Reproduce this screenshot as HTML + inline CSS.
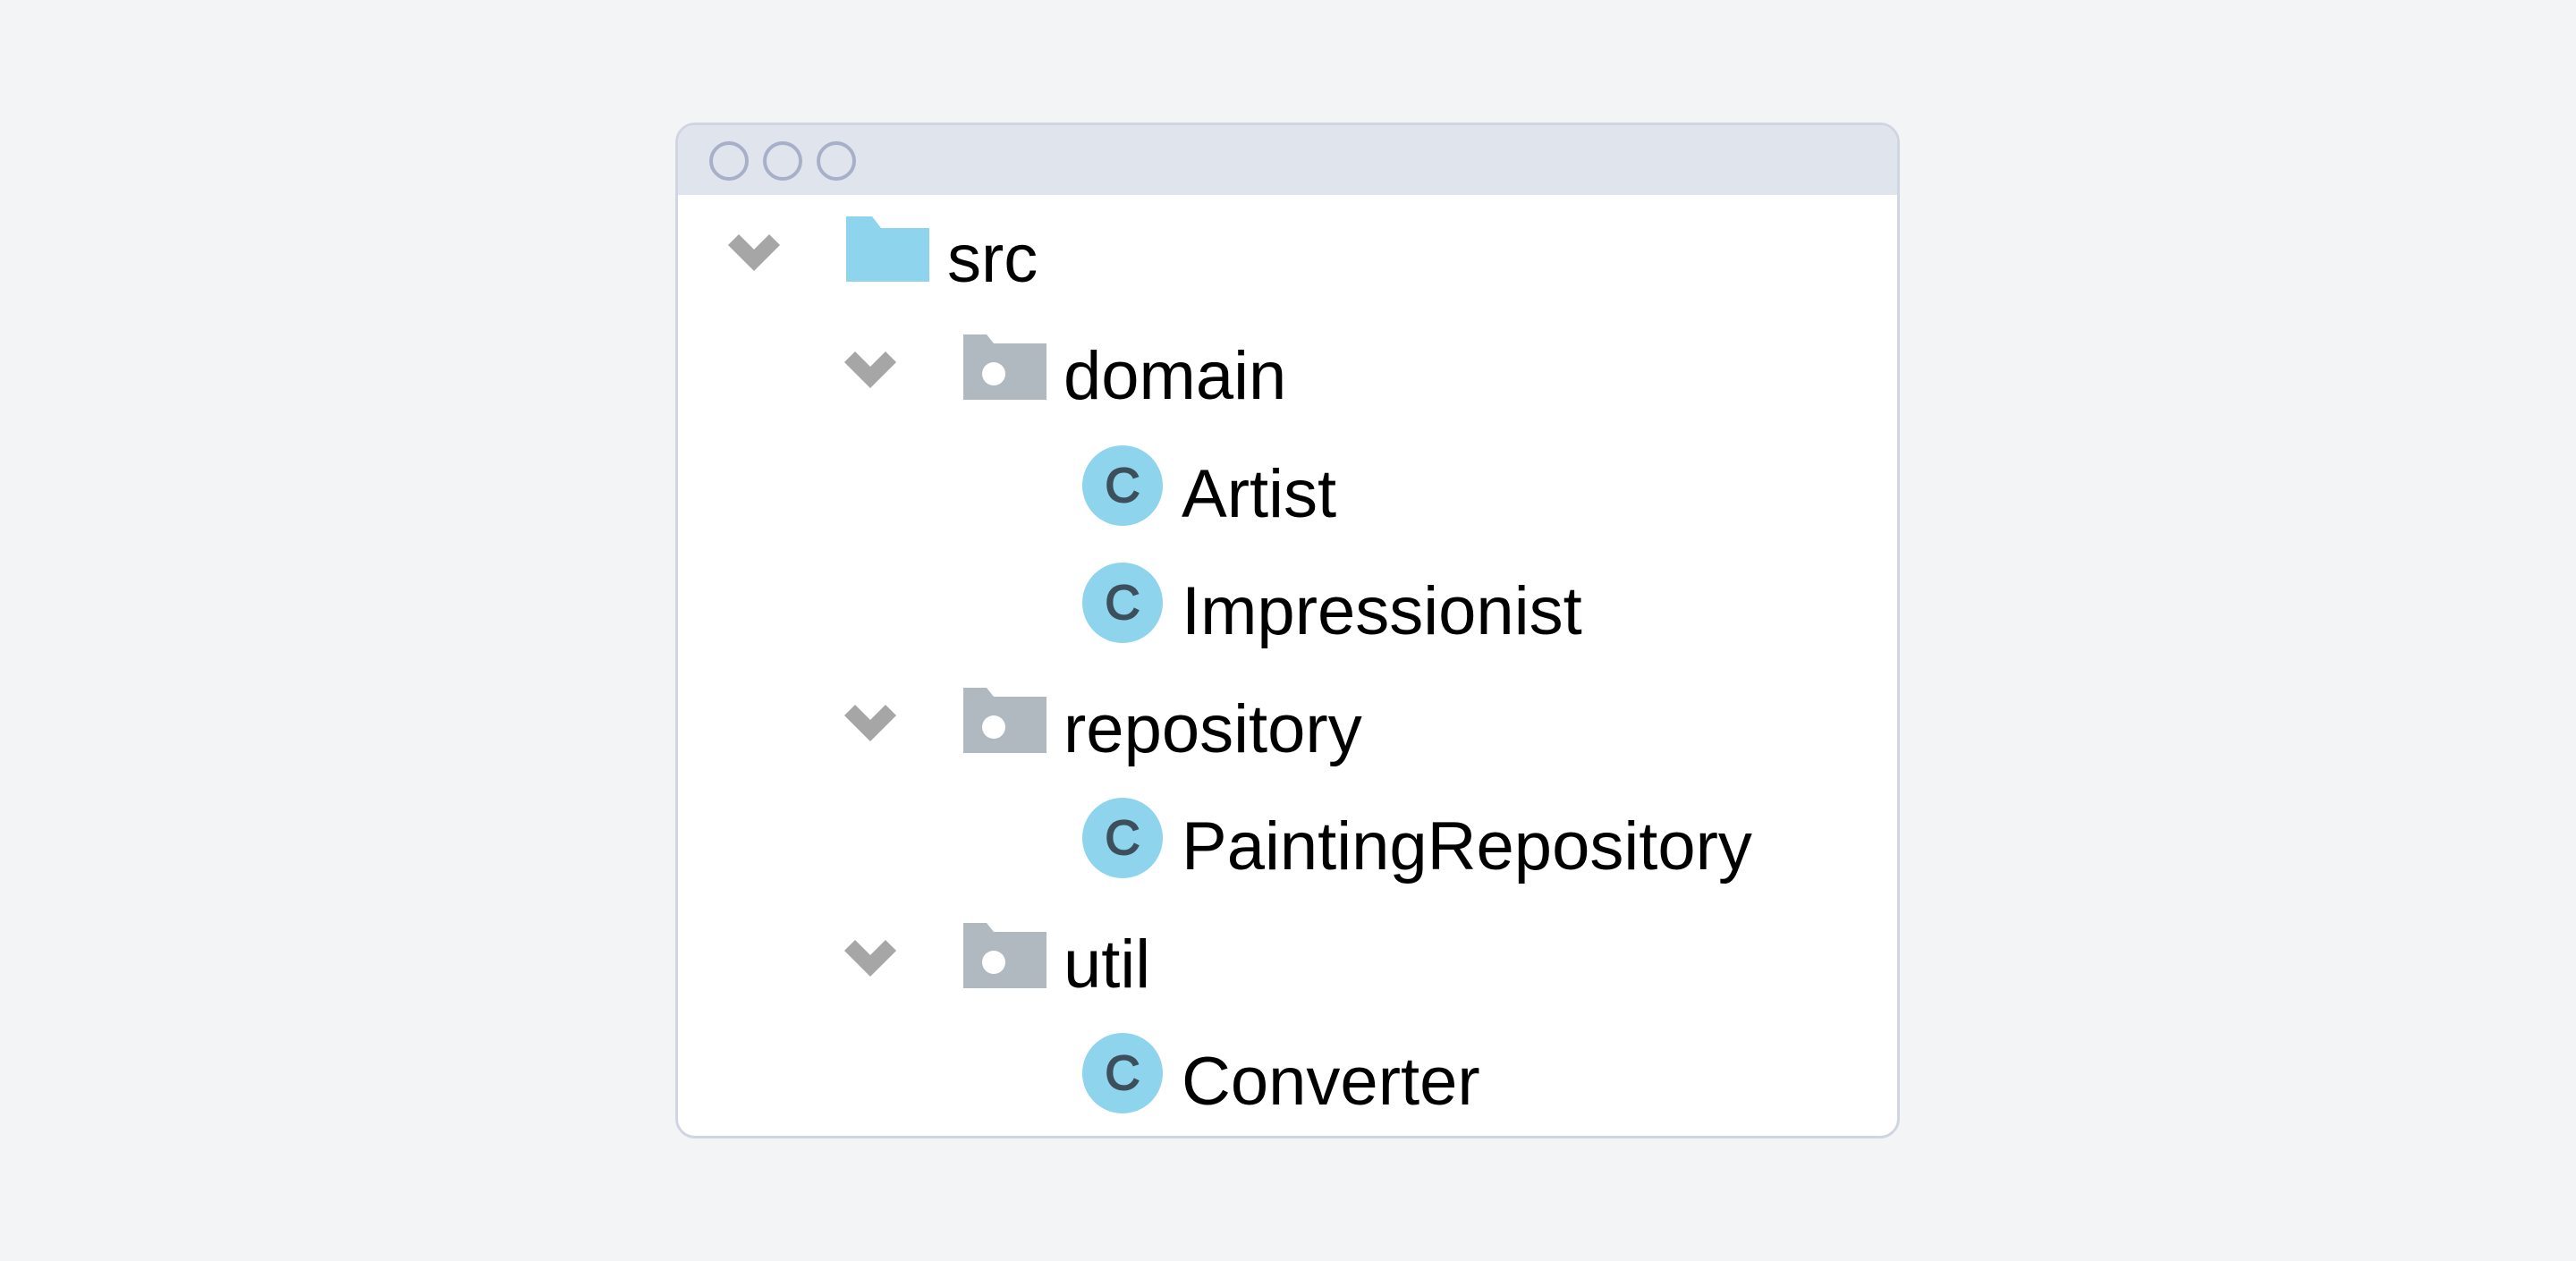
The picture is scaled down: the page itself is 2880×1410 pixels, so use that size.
<!DOCTYPE html>
<html><head><meta charset="utf-8"><style>
html,body{margin:0;padding:0}
body{width:2880px;height:1410px;background:#f3f4f6;position:relative;overflow:hidden;font-family:"Liberation Sans",sans-serif}
.win{position:absolute;left:755px;top:137px;width:1363px;height:1130px;border:3px solid #cfd5e1;border-radius:22px;background:#fff;overflow:hidden}
.bar{position:absolute;left:0;top:0;right:0;height:78px;background:#e0e5ed}
.dot{position:absolute;top:18px;width:36px;height:36px;border:4px solid #a7b0c8;border-radius:50%}
.t{position:absolute;font-size:76px;color:#000;line-height:1;white-space:nowrap}
.cls{position:absolute;width:90px;height:90px;border-radius:50%;background:#8dd4ec;color:#3d4f5c;font-size:54px;font-weight:normal;-webkit-text-stroke:2px #3d4f5c;text-align:center;line-height:90px}
</style></head><body>
<div class="win">
<div class="bar">
<div class="dot" style="left:35px"></div>
<div class="dot" style="left:95px"></div>
<div class="dot" style="left:155px"></div>
</div>
</div>
<svg width="2880" height="1410" style="position:absolute;left:0;top:0">
<defs>
<path id="chev" d="M-23,-14 L0,9 L23,-14" fill="none" stroke="#a6a6a6" stroke-width="17"/>
<g id="gf"><path d="M-46,-36 H-20 L-12,-26 H47 V37 H-46 Z" fill="#b0b9c0"/><circle cx="-12" cy="8" r="13" fill="#fff"/></g>
</defs>
<use href="#chev" x="843" y="282"/>
<path d="M946,242 H975 L985,255 H1039 V315 H946 Z" fill="#8dd4ec"/>
<use href="#chev" x="973" y="413"/>
<use href="#gf" x="1123" y="410"/>
<use href="#chev" x="973" y="808"/>
<use href="#gf" x="1123" y="805"/>
<use href="#chev" x="973" y="1071"/>
<use href="#gf" x="1123" y="1068"/>
</svg>
<div class="t" style="left:1059px;top:252px">src</div>
<div class="t" style="left:1189px;top:383px">domain</div>
<div class="cls" style="left:1210px;top:498px">C</div>
<div class="t" style="left:1321px;top:515px">Artist</div>
<div class="cls" style="left:1210px;top:629px">C</div>
<div class="t" style="left:1321px;top:646px">Impressionist</div>
<div class="t" style="left:1189px;top:778px">repository</div>
<div class="cls" style="left:1210px;top:892px">C</div>
<div class="t" style="left:1321px;top:909px">PaintingRepository</div>
<div class="t" style="left:1189px;top:1041px">util</div>
<div class="cls" style="left:1210px;top:1155px">C</div>
<div class="t" style="left:1321px;top:1172px">Converter</div>
</body></html>
